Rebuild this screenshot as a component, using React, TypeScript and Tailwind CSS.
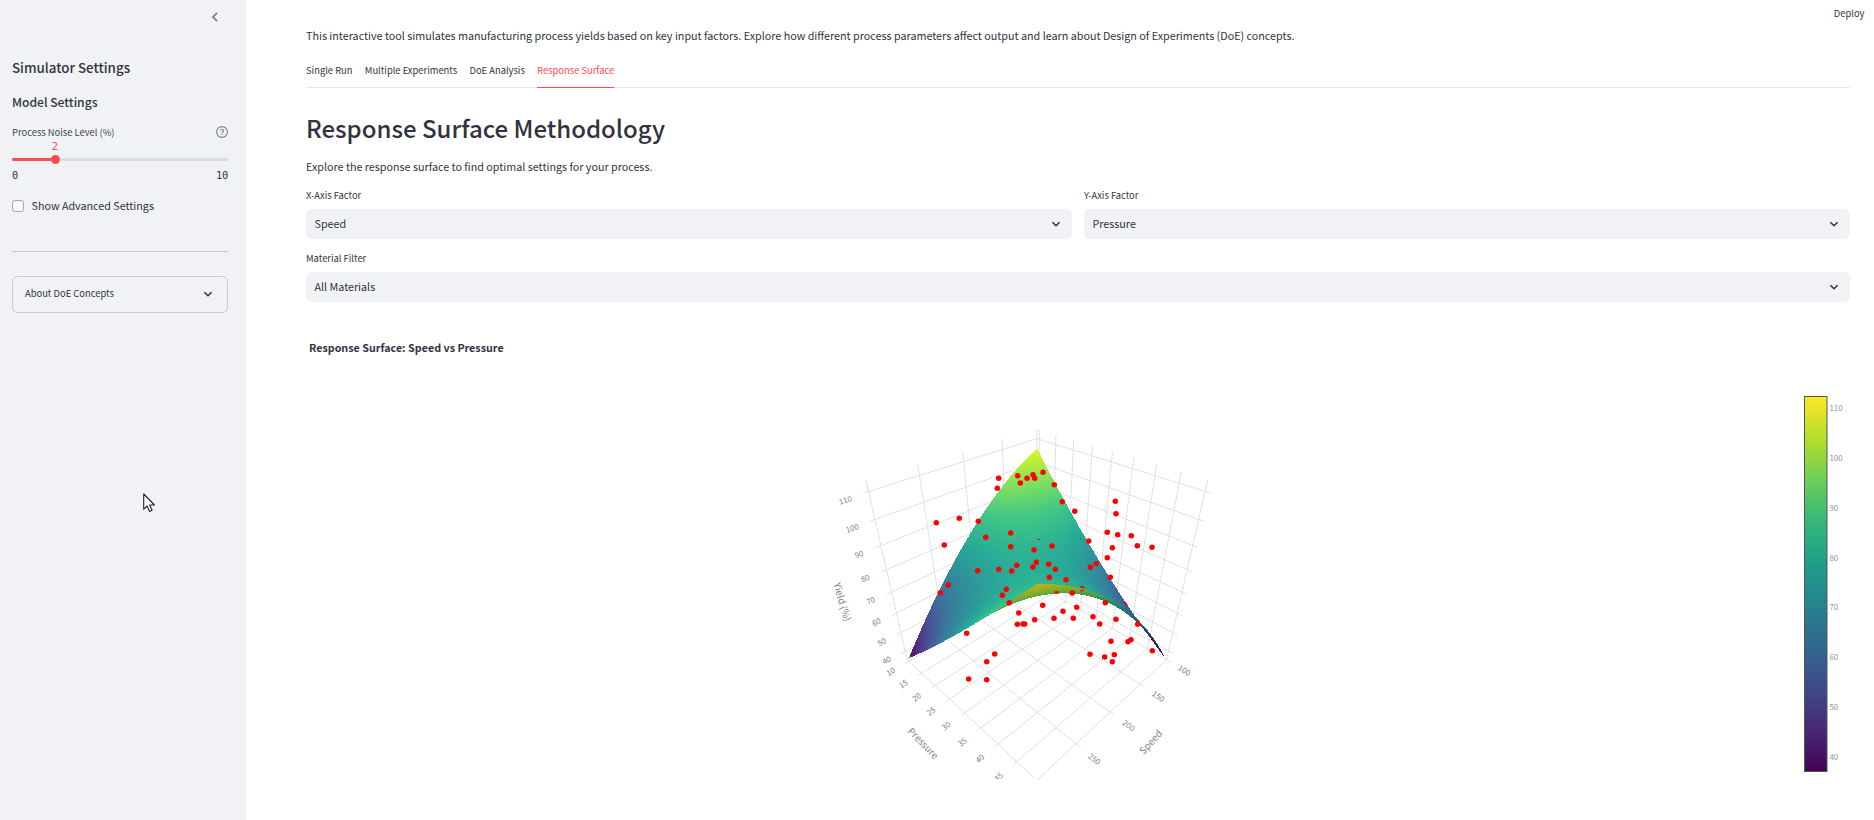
import type { ReactNode } from "react";

type Vec3 = [number, number, number];
type Rgb = [number, number, number];

// ---- Camera -------------------------------------------------------------
const CX = 1037;
const CY = 584.7;
const FOCAL = 452.8;
const DIST = 1.25 * Math.sqrt(3);

function project([x, y, z]: Vec3): [number, number, number] {
  const depth = DIST - (x + y + z) / Math.sqrt(3);
  const right = (y - x) / Math.SQRT2;
  const up = (2 * z - x - y) / Math.sqrt(6);
  return [CX + (FOCAL * right) / depth, CY - (FOCAL * up) / depth, depth];
}

const speedX = (s: number) => -0.498 + ((s - 100) / 50) * 0.2485;
const pressureY = (p: number) => -0.4825 + ((p - 10) / 5) * 0.1221;
const yieldZ = (v: number) => 0.084 + 0.01305 * (v - 80);

// ---- Colour scale -------------------------------------------------------
const VIRIDIS: Rgb[] = [
  [68, 1, 84],
  [72, 40, 120],
  [62, 73, 137],
  [49, 104, 142],
  [38, 130, 142],
  [31, 158, 137],
  [53, 183, 121],
  [110, 206, 88],
  [181, 222, 43],
  [253, 231, 37],
];

function viridis(t: number, gain: number, lift: number): string {
  const c = Math.min(0.9999, Math.max(0, t)) * 9;
  const i = Math.floor(c);
  const f = c - i;
  const mix = VIRIDIS[i].map((a, k) => Math.round(Math.min(255, (a + (VIRIDIS[i + 1][k] - a) * f) * gain + lift)));
  return `rgb(${mix.join(",")})`;
}

// ---- Surface mesh -------------------------------------------------------
const yieldAt = (s: number, p: number) =>
  79.35 + 1.25 * s + 1.25 * p + 36.15 * s * p - 9.8 * s * s + 3 * p * p - 1.5 * s * (p * p - 1);

const STEPS = 72;
const HALF = 0.489;

const mesh = (() => {
  const quads: { pts: string; depth: number; fill: string }[] = [];
  const at = (i: number, j: number) => {
    const s = -1 + (2 * i) / STEPS;
    const p = -1 + (2 * j) / STEPS;
    const v = yieldAt(s, p);
    return { v, q: project([HALF * s, HALF * p, yieldZ(v)]) };
  };
  for (let i = 0; i < STEPS; i++) {
    for (let j = 0; j < STEPS; j++) {
      const c = [at(i, j), at(i + 1, j), at(i + 1, j + 1), at(i, j + 1)];
      const v = (c[0].v + c[1].v + c[2].v + c[3].v) / 4;
      const [a, b, , d] = c.map((k) => k.q);
      const under = (b[0] - a[0]) * (d[1] - a[1]) - (b[1] - a[1]) * (d[0] - a[0]) > 0;
      const t = (v - 37.1) / 75.3;
      quads.push({
        pts: c.map((k) => `${k.q[0].toFixed(2)},${k.q[1].toFixed(2)}`).join(" "),
        depth: c.reduce((n, k) => n + k.q[2], 0),
        fill: under ? viridis(t, 0.78, 0) : viridis(t + 0.012, 1.04, 8),
      });
    }
  }
  return quads.sort((m, n) => n.depth - m.depth);
})();

// ---- Grid ---------------------------------------------------------------
const SPEEDS = [100, 150, 200, 250, 300];
const PRESSURES = [10, 15, 20, 25, 30, 35, 40, 45, 50];
const YIELDS = [40, 50, 60, 70, 80, 90, 100, 110];
const OUT = 0.52;
const TOP = 0.526;

const gridLines: [Vec3, Vec3][] = [
  ...SPEEDS.flatMap((s): [Vec3, Vec3][] => [
    [[speedX(s), -0.5, -0.5], [speedX(s), -0.5, TOP]],
    [[speedX(s), -0.5, -0.5], [speedX(s), OUT, -0.5]],
  ]),
  ...PRESSURES.flatMap((p): [Vec3, Vec3][] => [
    [[-0.5, pressureY(p), -0.5], [-0.5, pressureY(p), TOP]],
    [[-0.5, pressureY(p), -0.5], [OUT, pressureY(p), -0.5]],
  ]),
  ...YIELDS.flatMap((v): [Vec3, Vec3][] => [
    [[-0.5, -0.5, yieldZ(v)], [OUT, -0.5, yieldZ(v)]],
    [[-0.5, -0.5, yieldZ(v)], [-0.5, OUT, yieldZ(v)]],
  ]),
];

// ---- Experiment points --------------------------------------------------
const POINTS: [number, number][] = [
  [998.7, 478.3], [997.3, 488.3], [1017.7, 475.7], [1020.3, 483], [1027, 478.3], [1033, 474.7],
  [1034.7, 478.3], [959.3, 518.3], [936.3, 522.7], [978.3, 521.3], [985.7, 537.3], [1010.7, 533],
  [1010.7, 546.7], [944.3, 545], [1034, 550], [1036.3, 562.3], [1033, 567], [1016.7, 565.3],
  [1011.7, 571], [998.7, 569.3], [977.7, 570.7], [948.3, 585], [940.3, 592.7], [1006.3, 589.3],
  [1002.3, 595.3], [1043, 472.3], [1054.3, 484.7], [1062.3, 501.7], [1074.7, 511.3], [1115.3, 501.3],
  [1116, 513.7], [1088.7, 541], [1107.3, 532.3], [1117.7, 534.7], [1131.3, 535.7], [1137.3, 545.7],
  [1152, 547.3], [1112.3, 547.7], [1107.3, 557.7], [1096.3, 563.7], [1090.3, 567.3], [1052, 546],
  [1048.7, 564.3], [1055.3, 569.3], [1049.3, 577.3], [1066, 579.7], [1110.3, 577.3], [1072.3, 593],
  [1009.3, 602.7], [1018.7, 613], [1017.3, 624.3], [1023, 624], [1024.7, 624], [1034.7, 619.8],
  [966.7, 633.3], [994.7, 654], [986.7, 661.7], [968.7, 679], [986.7, 679.7], [1042.7, 605.3],
  [1054, 618.3], [1063, 611.3], [1076.7, 607.3], [1073.3, 618.3], [1093, 616.7], [1099.7, 624],
  [1105.3, 602.7], [1116, 619.3], [1137.7, 624.3], [1111, 641.3], [1131, 639.7], [1128, 641.7],
  [1090, 654.3], [1104.7, 657], [1114.3, 654.7], [1112.3, 661.7], [1152.3, 650.7],
];

// Points that the surface hides in part
const PARTIAL = [
  "M1054.2 591.3h5l-.6 1.6q-1.9 1.4-3.8 0z",
  "M1080 586.2q2-.8 4.2.4l.4 1.6h-2.2l-2.2-.8z",
  "M1080 590h4v1.2h-3.6z",
  "M1123.5 601.2l1.8.6 2 2.2v1l-1 .2-2.2-2.2z",
  "M1037.6 538.8h2.4v1h-2.4z",
  "M1080 538.3h1v.8h-1z",
];

const TICKS: [string, number, number, number][] = [
  ["110", 845.3, 500.2, -16], ["100", 852.3, 528.2, -18], ["90", 859, 554.3, -20], ["80", 865.3, 578.3, -22],
  ["70", 870.7, 600.7, -24], ["60", 876.3, 622, -26], ["50", 881.7, 642, -28], ["40", 886.7, 660.2, -30],
  ["10", 890.7, 671.5, -31], ["15", 903.3, 684, -33], ["20", 916.7, 697.3, -35], ["25", 931, 711.3, -36],
  ["30", 946.3, 726, -38], ["35", 962.3, 742, -39], ["40", 980, 758.5, -40], ["45", 998.5, 777, -42],
  ["100", 1184.3, 670.4, 32], ["150", 1158.3, 696.4, 34], ["200", 1128.7, 725.6, 36], ["250", 1094.3, 759, 38],
];

const AXIS_TITLES: [string, number, number, number][] = [
  ["Yield (%)", 842, 602, 74],
  ["Pressure", 923, 743.5, 46],
  ["Speed", 1151, 742.3, -48],
];

const SCALE_TICKS = [110, 100, 90, 80, 70, 60, 50, 40];

function SurfaceChart() {
  return (
    <svg
      viewBox="306 356 1544 464"
      width="1544"
      height="464"
      className="block overflow-visible"
      role="img"
      aria-label="Response Surface: Speed vs Pressure"
    >
      <defs>
        <clipPath id="scene">
          <rect x="700" y="389" width="700" height="390" />
        </clipPath>
        <linearGradient id="scale" x1="0" y1="1" x2="0" y2="0">
          {VIRIDIS.map((c, i) => (
            <stop key={i} offset={i / 9} stopColor={`rgb(${c.join(",")})`} />
          ))}
        </linearGradient>
      </defs>

      <g clipPath="url(#scene)">
        <g className="stroke-[#d6d6d8]" strokeWidth="0.95" strokeDasharray="2.6 0.8">
          {gridLines.map(([a, b], i) => {
            const p = project(a);
            const q = project(b);
            return <line key={i} x1={p[0]} y1={p[1]} x2={q[0]} y2={q[1]} />;
          })}
        </g>
        <g shapeRendering="crispEdges">
          {mesh.map((m, i) => (
            <polygon key={i} points={m.pts} fill={m.fill} />
          ))}
        </g>
        <g className="fill-[#ff0000]">
          {POINTS.map(([x, y], i) => (
            <circle key={i} cx={x} cy={y} r="2.75" />
          ))}
          {PARTIAL.map((d, i) => (
            <path key={i} d={d} />
          ))}
        </g>
        <g className="fill-[#7d8092] text-[7.8px]" textAnchor="middle">
          {TICKS.map(([t, x, y, r], i) => (
            <text key={i} transform={`translate(${x} ${y}) rotate(${r})`} dy="2.8">
              {t}
            </text>
          ))}
        </g>
        <g className="fill-[#7d8092] text-[9.7px]" textAnchor="middle">
          {AXIS_TITLES.map(([t, x, y, r]) => (
            <text key={t} transform={`translate(${x} ${y}) rotate(${r})`} dy="3.2">
              {t}
            </text>
          ))}
        </g>
      </g>

      <rect x="1804.5" y="396.5" width="22.5" height="375" fill="url(#scale)" className="stroke-[#555]" strokeWidth="1" />
      <g className="fill-[#8f92a1] text-[8px]">
        {SCALE_TICKS.map((v, i) => (
          <text key={v} x="1829.4" y={411 + i * 49.86}>
            {v}
          </text>
        ))}
      </g>
    </svg>
  );
}

function Chevron({ className }: { className: string }) {
  return (
    <svg viewBox="0 0 12 12" className={className} fill="none" stroke="currentColor" strokeWidth="1.5">
      <path d="M2.4 4.2 6 7.8l3.6-3.6" />
    </svg>
  );
}

function Select({ label, value }: { label: string; value: string }) {
  return (
    <div className="flex flex-1 flex-col">
      <label className="h-[14px] text-[9.4px] leading-[14px]">{label}</label>
      <div className="mt-[7px] flex h-[30px] items-center justify-between rounded-md bg-[#f0f2f6] pr-[10px] pl-[8.5px] text-[10.74px]">
        <span>{value}</span>
        <Chevron className="size-3" />
      </div>
    </div>
  );
}

function Tab({ active = false, children }: { active?: boolean; children: ReactNode }) {
  return (
    <button
      className={
        active
          ? "-mb-px h-[35px] border-b border-[#ff4b4b] text-[#ff4b4b] leading-[34px]"
          : "-mb-px h-[35px] border-b border-transparent leading-[34px]"
      }
    >
      {children}
    </button>
  );
}

function Sidebar() {
  return (
    <aside className="flex w-[246px] shrink-0 flex-col bg-[#f0f2f6] pr-[18px] pl-3">
      <div className="flex h-[33px] items-center justify-end pr-[6px] text-[#7c7f8e]">
        <Chevron className="size-3.5 rotate-90" />
      </div>
      <h2 className="mt-[25px] h-5 text-[13.35px] leading-5 font-medium">Simulator Settings</h2>
      <h3 className="mt-[15px] h-[18px] text-[12.1px] leading-[18px] font-medium">Model Settings</h3>

      <div className="mt-[14px] flex h-[14px] items-center justify-between text-[9.4px]">
        <span className="text-[#44464f]">Process Noise Level (%)</span>
        <svg viewBox="0 0 24 24" className="size-3 overflow-visible text-[#7c7f8e]" fill="none" stroke="currentColor" strokeWidth="2.2">
          <circle cx="12" cy="12" r="10.8" />
          <path d="M8.9 9.3a3.1 3.1 0 0 1 6.1.7c0 2-3 2.6-3 4.6" />
          <path d="M12 16.2v2" />
        </svg>
      </div>
      <div className="flex h-[14px] w-[86px] justify-center font-['DejaVu_Sans_Mono',monospace] text-[10.5px] leading-[14px] text-[#ff4b4b]">
        2
      </div>
      <div className="mt-[2px] flex h-[9px] items-center">
        <div className="h-[3px] w-[38.5px] rounded-l-full bg-[#ff4b4b]" />
        <div className="size-[9px] rounded-full bg-[#ff4b4b]" />
        <div className="h-[3px] flex-1 rounded-r-full bg-[#d9dde8]" />
      </div>
      <div className="mt-[3px] flex h-4 justify-between font-['DejaVu_Sans_Mono',monospace] text-[10.4px] leading-4 tracking-[-0.2px]">
        <span>0</span>
        <span>10</span>
      </div>

      <label className="mt-[14px] flex h-[18px] items-center gap-[7.5px] text-[10.74px]">
        <span className="size-3 rounded-[3px] border border-[#a3a5b0] bg-[#f8f9fb]" />
        Show Advanced Settings
      </label>

      <hr className="mt-[36px] border-[#c9cbd1]" />

      <div className="mt-[24px] flex h-[37px] items-center justify-between rounded-md border border-[#c9cbd1] pr-[13.5px] pb-px pl-3 text-[9.4px]">
        <span className="-mt-px">About DoE Concepts</span>
        <Chevron className="size-3" />
      </div>
    </aside>
  );
}

export default function App() {
  return (
    <div className="relative flex h-[820px] w-[1874px] overflow-hidden bg-white font-[Noto_Sans_CJK_JP,sans-serif] text-[#31333f]">
      <Sidebar />
      <main className="flex flex-1 flex-col pt-[27px] pr-6 pl-[60px]">
        <p className="h-[18px] text-[10.75px] leading-[18px]">
          This interactive tool simulates manufacturing process yields based on key input factors. Explore how different
          process parameters affect output and learn about Design of Experiments (DoE) concepts.
        </p>

        <nav className="mt-2 flex h-[35px] gap-[12.3px] border-b border-[#e6e7ea] text-[9.4px]">
          <Tab>Single Run</Tab>
          <Tab>Multiple Experiments</Tab>
          <Tab>DoE Analysis</Tab>
          <Tab active>Response Surface</Tab>
        </nav>

        <h1 className="mt-6 h-8 text-[24px] leading-8 font-medium">Response Surface Methodology</h1>
        <p className="mt-[14px] h-[18px] text-[10.74px] leading-[18px]">
          Explore the response surface to find optimal settings for your process.
        </p>

        <div className="mt-3 flex gap-3">
          <Select label="X-Axis Factor" value="Speed" />
          <Select label="Y-Axis Factor" value="Pressure" />
        </div>
        <div className="mt-3 flex">
          <Select label="Material Filter" value="All Materials" />
        </div>

        <h4 className="mt-[37px] h-[17px] pl-[3px] text-[10.74px] leading-[18px] font-bold">Response Surface: Speed vs Pressure</h4>
        <SurfaceChart />
      </main>

      <button className="absolute top-[6px] right-[9.5px] h-[14px] text-[9.4px] leading-[14px]">Deploy</button>

      <svg viewBox="0 0 13 20" className="absolute top-[493px] left-[143px] h-5 w-[13px]">
        <path
          d="M.7 1v15.2l3.4-3.2 2.4 5.4 2.6-1.1-2.4-5.3h4.7z"
          className="fill-white stroke-[#1e2030]"
          strokeWidth="1.1"
          strokeLinejoin="round"
        />
      </svg>
    </div>
  );
}
